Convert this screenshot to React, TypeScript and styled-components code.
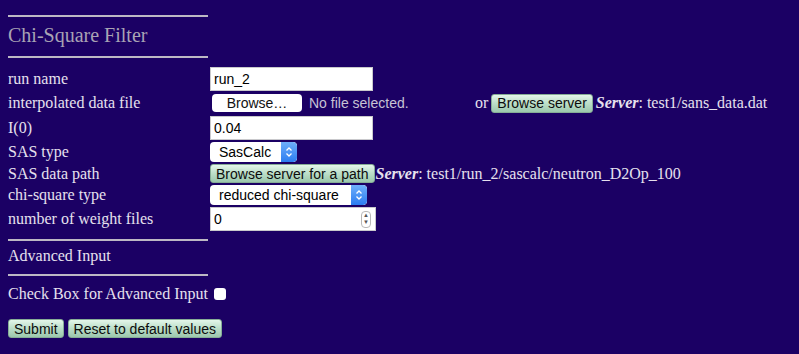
import React from 'react';
import styled, { createGlobalStyle } from 'styled-components';

const Global = createGlobalStyle({
	'html, body': {
		margin: 0,
		background: '#1b0064',
	},
	body: {
		padding: 8,
		fontFamily: '"Liberation Serif", "Times New Roman", serif',
		fontSize: 16,
		color: '#e6e0ee',
	},
});

const Page = styled.div({
	width: 783,
	height: 338,
});

const Rule = styled.div<{ $mt?: number }>(({ $mt }) => ({
	width: 200,
	height: 2,
	marginTop: $mt ?? 0,
	background: '#bdb8c4',
}));

const Title = styled.h2({
	margin: 0,
	padding: '7px 0 9px',
	fontSize: 20,
	fontWeight: 'normal',
	color: '#a9a3b4',
	lineHeight: '23px',
});

const Form = styled.div({
	display: 'flex',
	flexDirection: 'column',
	marginTop: 8,
});

const Row = styled.div<{ $h: number }>(({ $h }) => ({
	display: 'flex',
	alignItems: 'center',
	height: $h,
}));

const Label = styled.div({
	width: 202,
	flexShrink: 0,
	lineHeight: '18px',
});

const Field = styled.div({
	display: 'flex',
	alignItems: 'center',
	fontFamily: '"Liberation Sans", Arial, sans-serif',
	fontSize: 13,
});

const TextBox = styled.div<{ $w: number }>(({ $w }) => ({
	width: $w,
	height: 24,
	boxSizing: 'border-box',
	background: '#fff',
	border: '1px solid #c9c9cc',
	color: '#000',
	fontSize: 14,
	padding: '0 4px 0 3px',
	display: 'flex',
	alignItems: 'center',
	justifyContent: 'space-between',
}));

const Spin = styled.span({
	width: 8,
	height: 15,
	border: '1px solid #b8b8b8',
	borderRadius: 4,
	fontSize: 6,
	lineHeight: '7px',
	textAlign: 'center',
	color: '#555',
	display: 'flex',
	flexDirection: 'column',
});

const FileButton = styled.div({
	width: 90,
	height: 18,
	marginLeft: 2,
	boxSizing: 'border-box',
	background: '#fff',
	borderRadius: 4,
	color: '#111',
	fontSize: 14,
	display: 'flex',
	alignItems: 'center',
	justifyContent: 'center',
});

const Muted = styled.span({
	color: '#c7c3d4',
	fontSize: 14,
	marginLeft: 7,
	width: 166,
});

const Or = styled.span({
	fontFamily: '"Liberation Serif", "Times New Roman", serif',
	fontSize: 16,
	color: '#e6e0ee',
	marginRight: 3,
});

const GreenButton = styled.div({
	height: 19,
	boxSizing: 'border-box',
	padding: '0 5px',
	borderRadius: 3,
	background: 'linear-gradient(#e4f6ea, #bfe0cb 45%, #9cc8ad)',
	border: '1px solid #86ad96',
	color: '#0c0c0c',
	fontFamily: '"Liberation Sans", Arial, sans-serif',
	fontSize: 14,
	display: 'flex',
	alignItems: 'center',
	whiteSpace: 'nowrap',
});

const ServerNote = styled.span<{ $ml?: number }>(({ $ml }) => ({
	fontFamily: '"Liberation Serif", "Times New Roman", serif',
	fontSize: 16,
	color: '#e6e0ee',
	marginLeft: $ml ?? 3,
	whiteSpace: 'nowrap',
	i: { fontWeight: 'bold' },
}));

const Select = styled.div<{ $w: number }>(({ $w }) => ({
	width: $w,
	height: 20,
	boxSizing: 'border-box',
	background: '#fff',
	borderRadius: 4,
	display: 'flex',
	alignItems: 'center',
	justifyContent: 'space-between',
	color: '#000',
	fontSize: 14,
	paddingLeft: 9,
	overflow: 'hidden',
}));

const Stepper = styled.span({
	width: 16,
	height: 20,
	background: 'linear-gradient(#6fb0fb, #2b7cf0)',
	borderRadius: '0 4px 4px 0',
	display: 'flex',
	alignItems: 'center',
	justifyContent: 'center',
});

const Heading = styled.div({
	padding: '6px 0 9px',
	lineHeight: '18px',
});

const CheckRow = styled.div({
	display: 'flex',
	alignItems: 'center',
	gap: 6,
	padding: '9px 0',
	lineHeight: '18px',
});

const Check = styled.span({
	width: 12,
	height: 12,
	background: '#fff',
	borderRadius: 3,
	display: 'inline-block',
});

const Actions = styled.div({
	display: 'flex',
	gap: 4,
	marginTop: 7,
});

const Arrows = () => (
	<svg width="8" height="12" viewBox="0 0 8 12">
		<path d="M1.5 4.5L4 2l2.5 2.5M1.5 7.5L4 10l2.5-2.5" fill="none" stroke="#fff" strokeWidth="1.3" />
	</svg>
);

export default function App() {
	return (
		<Page>
			<Global />
			<Rule $mt={7} />
			<Title>Chi-Square Filter</Title>
			<Rule />
			<Form>
				<Row $h={26}>
					<Label>run name</Label>
					<Field>
						<TextBox $w={163}>run_2</TextBox>
					</Field>
				</Row>
				<Row $h={22}>
					<Label>interpolated data file</Label>
					<Field>
						<FileButton>Browse…</FileButton>
						<Muted>No file selected.</Muted>
						<Or>or</Or>
						<GreenButton>Browse server</GreenButton>
						<ServerNote>
							<i>Server</i>: test1/sans_data.dat
						</ServerNote>
					</Field>
				</Row>
				<Row $h={27}>
					<Label>I(0)</Label>
					<Field>
						<TextBox $w={163}>0.04</TextBox>
					</Field>
				</Row>
				<Row $h={22}>
					<Label>SAS type</Label>
					<Field>
						<Select $w={87}>
							SasCalc
							<Stepper>
								<Arrows />
							</Stepper>
						</Select>
					</Field>
				</Row>
				<Row $h={21}>
					<Label>SAS data path</Label>
					<Field>
						<GreenButton>Browse server for a path</GreenButton>
						<ServerNote $ml={1}>
							<i>Server</i>: test1/run_2/sascalc/neutron_D2Op_100
						</ServerNote>
					</Field>
				</Row>
				<Row $h={22}>
					<Label>chi-square type</Label>
					<Field>
						<Select $w={157}>
							reduced chi-square
							<Stepper>
								<Arrows />
							</Stepper>
						</Select>
					</Field>
				</Row>
				<Row $h={26}>
					<Label>number of weight files</Label>
					<Field>
						<TextBox $w={166}>
							0
							<Spin>
								<span>▲</span>
								<span>▼</span>
							</Spin>
						</TextBox>
					</Field>
				</Row>
			</Form>
			<Rule $mt={7} />
			<Heading>Advanced Input</Heading>
			<Rule />
			<CheckRow>
				Check Box for Advanced Input
				<Check />
			</CheckRow>
			<Actions>
				<GreenButton>Submit</GreenButton>
				<GreenButton>Reset to default values</GreenButton>
			</Actions>
		</Page>
	);
}
